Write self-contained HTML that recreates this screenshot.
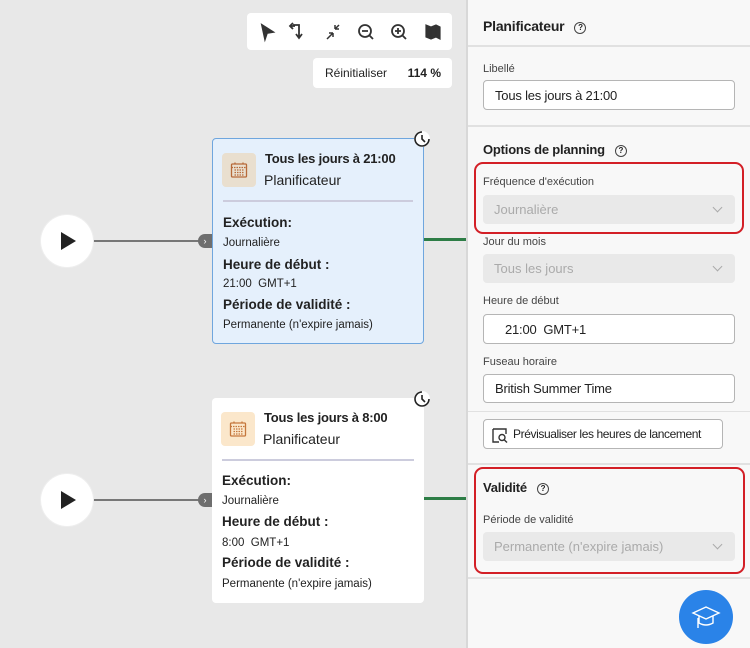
<!DOCTYPE html>
<html><head><meta charset="utf-8"><style>
*{box-sizing:border-box;margin:0;padding:0}
body{width:750px;height:648px;overflow:hidden;background:#e8e8e8;font-family:"Liberation Sans",sans-serif;color:#222;position:relative}
.a{position:absolute}
.panel{left:466px;top:0;width:284px;height:648px;background:#f8f8f8;border-left:2px solid #d8d8d8}
.hr{position:absolute;left:0;width:284px;height:2px;background:#e1e1e1}
.lbl{position:absolute;font-size:11px;color:#444}
.inp{position:absolute;background:#fff;border:1px solid #b5b5b5;border-radius:4px;font-size:13px;color:#222;padding-left:11px;display:flex;align-items:center;white-space:nowrap;letter-spacing:-0.2px}
.sel{position:absolute;background:#e9e9e9;border-radius:4px;font-size:13px;color:#aaa;padding-left:11px;display:flex;align-items:center}
.sel:after{content:"";position:absolute;right:14px;top:9px;width:6px;height:6px;border-right:1.5px solid #aaa;border-bottom:1.5px solid #aaa;transform:rotate(45deg)}
.h{position:absolute;font-weight:bold;font-size:13px;color:#222;letter-spacing:-0.2px}
.q{display:inline-block;width:12px;height:12px;border:1.3px solid #444;border-radius:50%;font-size:8px;text-align:center;line-height:10px;font-weight:bold;margin-left:10px;vertical-align:1px}
.red{position:absolute;border:2.5px solid #d31f26;border-radius:9px}
.card{position:absolute;left:212px;width:212px;border-radius:4px;font-size:12px}
.card .ic{position:absolute;left:9px;top:14px;width:34px;height:34px;border-radius:4px}
.card .t{position:absolute;left:52px;top:12px;font-weight:bold;font-size:13px;letter-spacing:-0.2px}
.card .s{position:absolute;left:51px;top:33px;font-size:14px}
.card .ln{position:absolute;left:10px;right:10px;top:61px;height:2px;background:#ccd}
.card b{position:absolute;left:10px;font-size:13.5px}
.card span{position:absolute;left:10px;font-size:11.5px;white-space:nowrap}
.play{width:52px;height:52px;border-radius:50%;background:#fff;box-shadow:0 0 0 1px #eee}
.play:after{content:"";position:absolute;left:20px;top:17px;border-left:15px solid #222;border-top:9px solid transparent;border-bottom:9px solid transparent}
.gl{height:2px;background:#777}
.chev{width:14px;height:14px;border-radius:50% 0 0 50%;background:#6e6e6e;color:#fff;font-size:9px;text-align:center;line-height:14px}
.green{height:3px;background:#2d7d46}
</style></head><body>

<div class="a" style="left:247px;top:13px;width:205px;height:37px;background:#fff;border-radius:4px"></div>
<svg class="a" style="left:247px;top:13px" width="205" height="37" viewBox="0 0 205 37" fill="none" stroke="#333" stroke-width="1.8">
<path d="M15 12 L26 19 L20 20 L18 26 Z" fill="#333"/>
<path d="M46 12 L52 12 L52 24 M49 21 L52 25 L55 21" /><path d="M46 10 L43 13 L46 16 M43 13 L48 13"/>
<path d="M80 26 L86 20 M86 20 L86 24 M86 20 L82 20 M92 12 L88 16 M88 16 L88 12 M88 16 L92 16" stroke-width="1.5"/>
<circle cx="118" cy="18" r="6"/><path d="M115 18 L121 18 M122 22 L126 26"/>
<circle cx="151" cy="18" r="6"/><path d="M148 18 L154 18 M151 15 L151 21 M155 22 L159 26"/>
<path d="M179 12 L184 14 L189 12 L193 14 L193 26 L189 24 L184 26 L179 24 Z M184 14 L184 26 M189 12 L189 24" fill="#333" stroke-width="1.2"/>
</svg>
<div class="a" style="left:313px;top:58px;width:139px;height:30px;background:#fff;border-radius:4px;font-size:12px;line-height:30px"><span style="margin-left:12px">Réinitialiser</span><b style="position:absolute;right:11px">114 %</b></div>

<div class="a gl" style="left:92px;top:240px;width:110px"></div>
<div class="a play" style="left:41px;top:215px"></div>
<div class="a chev" style="left:198px;top:234px">›</div>
<div class="a green" style="left:424px;top:238px;width:42px"></div>
<div class="card" style="top:138px;height:206px;background:#e5f0fc;border:1.5px solid #6fa6de">
<div class="ic" style="background:#e9dfcf"></div>
<svg class="a" style="left:17px;top:22px" width="18" height="18" viewBox="0 0 18 18" fill="none" stroke="#b76a3a" stroke-width="1.3"><rect x="1.5" y="3" width="15" height="13" rx="1"/><path d="M1.5 6.5 H16.5 M5 1.5 V4 M13 1.5 V4 M4.5 9h9M4.5 11.5h9M4.5 14h9" stroke-dasharray="1.5 1"/></svg>
<div class="t">Tous les jours à 21:00</div><div class="s">Planificateur</div><div class="ln"></div>
<b style="top:76px">Exécution:</b><span style="top:98px">Journalière</span>
<b style="top:118px">Heure de début :</b><span style="top:139px">21:00&nbsp; GMT+1</span>
<b style="top:158px">Période de validité :</b><span style="top:180px">Permanente (n'expire jamais)</span>
</div>
<svg class="a" style="left:413px;top:130px" width="18" height="18" viewBox="0 0 18 18"><circle cx="9" cy="9" r="8" fill="#fff"/><path d="M9 2a7 7 0 1 0 7 7" fill="none" stroke="#222" stroke-width="1.6"/><path d="M9 5v4l3 3" fill="none" stroke="#222" stroke-width="1.6"/></svg>

<div class="a gl" style="left:92px;top:499px;width:110px"></div>
<div class="a play" style="left:41px;top:474px"></div>
<div class="a chev" style="left:198px;top:493px">›</div>
<div class="a green" style="left:424px;top:497px;width:42px"></div>
<div class="card" style="top:398px;height:205px;background:#fff">
<div class="ic" style="background:#fbe7cb"></div>
<svg class="a" style="left:17px;top:22px" width="18" height="18" viewBox="0 0 18 18" fill="none" stroke="#c5773c" stroke-width="1.3"><rect x="1.5" y="3" width="15" height="13" rx="1"/><path d="M1.5 6.5 H16.5 M5 1.5 V4 M13 1.5 V4 M4.5 9h9M4.5 11.5h9M4.5 14h9" stroke-dasharray="1.5 1"/></svg>
<div class="t">Tous les jours à 8:00</div><div class="s">Planificateur</div><div class="ln"></div>
<b style="top:75px">Exécution:</b><span style="top:97px">Journalière</span>
<b style="top:116px">Heure de début :</b><span style="top:139px">8:00&nbsp; GMT+1</span>
<b style="top:157px">Période de validité :</b><span style="top:180px">Permanente (n'expire jamais)</span>
</div>
<svg class="a" style="left:413px;top:390px" width="18" height="18" viewBox="0 0 18 18"><circle cx="9" cy="9" r="8" fill="#fff"/><path d="M9 2a7 7 0 1 0 7 7" fill="none" stroke="#222" stroke-width="1.6"/><path d="M9 5v4l3 3" fill="none" stroke="#222" stroke-width="1.6"/></svg>

<div class="a panel">
<div class="h" style="left:15px;top:18px;font-size:14px">Planificateur<span class="q">?</span></div>
<div class="hr" style="top:45px"></div>
<div class="lbl" style="left:15px;top:63px">Libellé</div>
<div class="inp" style="left:15px;top:80px;width:252px;height:30px">Tous les jours à 21:00</div>
<div class="hr" style="top:125px"></div>
<div class="h" style="left:15px;top:142px">Options de planning<span class="q">?</span></div>
<div class="red" style="left:6px;top:162px;width:270px;height:72px"></div>
<div class="lbl" style="left:15px;top:176px">Fréquence d'exécution</div>
<div class="sel" style="left:15px;top:195px;width:252px;height:29px">Journalière</div>
<div class="lbl" style="left:15px;top:236px">Jour du mois</div>
<div class="sel" style="left:15px;top:254px;width:252px;height:29px">Tous les jours</div>
<div class="lbl" style="left:15px;top:295px">Heure de début</div>
<div class="inp" style="left:15px;top:314px;width:252px;height:30px;padding-left:21px">21:00&nbsp; GMT+1</div>
<div class="lbl" style="left:15px;top:356px">Fuseau horaire</div>
<div class="inp" style="left:15px;top:374px;width:252px;height:29px">British Summer Time</div>
<div class="hr" style="top:411px;height:1px"></div>
<div class="inp" style="left:15px;top:419px;width:240px;height:30px;padding-left:29px;font-size:12px;letter-spacing:-0.4px">Prévisualiser les heures de lancement</div>
<svg class="a" style="left:24px;top:427px" width="16" height="16" viewBox="0 0 16 16" fill="none" stroke="#333" stroke-width="1.4"><path d="M1 2v13h6M1 2h13v5"/><circle cx="10" cy="10.5" r="3"/><path d="M12.2 12.7L15 15.5"/></svg>
<div class="hr" style="top:463px"></div>
<div class="red" style="left:6px;top:467px;width:271px;height:107px"></div>
<div class="h" style="left:15px;top:480px">Validité<span class="q">?</span></div>
<div class="lbl" style="left:15px;top:514px">Période de validité</div>
<div class="sel" style="left:15px;top:532px;width:252px;height:29px">Permanente (n'expire jamais)</div>
<div class="hr" style="top:577px"></div>
<div class="a" style="left:211px;top:590px;width:54px;height:54px;border-radius:50%;background:#2a83e8"></div>
<svg class="a" style="left:223px;top:603px" width="30" height="28" viewBox="0 0 30 28" fill="none" stroke="#fff" stroke-width="1.4"><path d="M2 10 L15 4 L28 10 L15 16 Z"/><path d="M8 13 V20 Q15 24 22 20 V13"/><path d="M7 15 V25"/></svg>
</div>
</body></html>
